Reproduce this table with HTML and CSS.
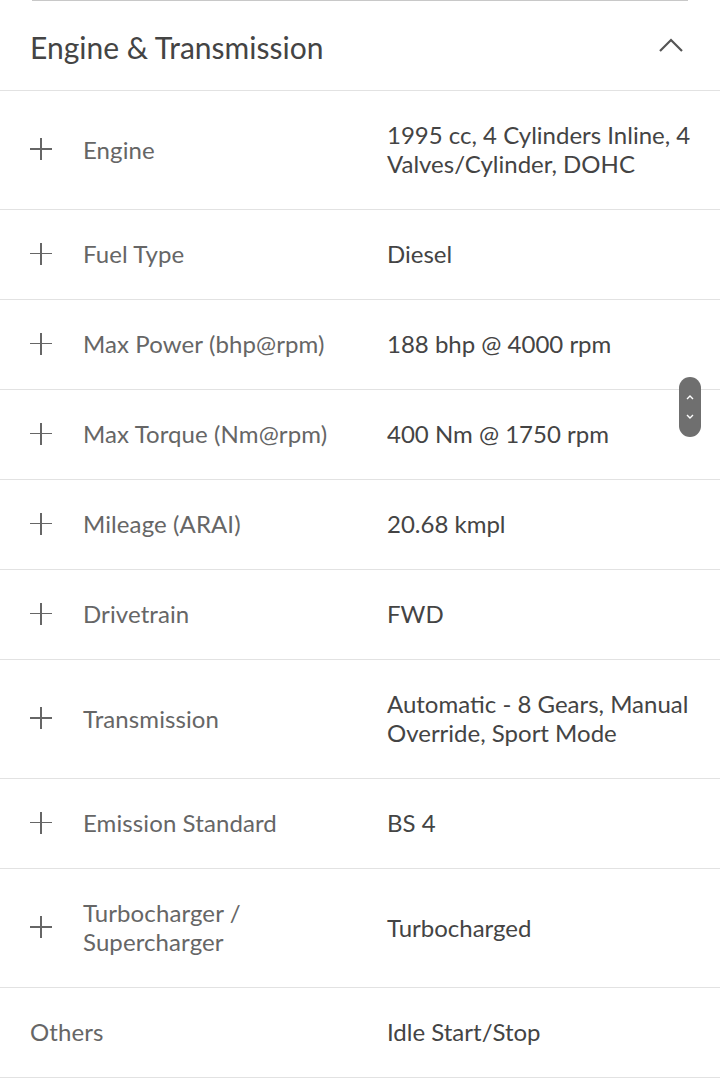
FILE: index.html
```html
<!DOCTYPE html>
<html lang="en">
<head>
    <meta charset="UTF-8">
    <meta name="viewport" content="width=device-width, initial-scale=1.0">
    <title>Specifications</title>
    <link rel="stylesheet" href="styles.css">
</head>
<body>
    <div class="card-edge"></div>

    <div class="spec-header">
        <h2>Engine &amp; Transmission</h2>
        <svg class="chevron" width="26" height="16" viewBox="0 0 26 16">
            <path d="M2 14 L13 3 L24 14" fill="none" stroke="#555" stroke-width="2.2"/>
        </svg>
    </div>

    <div class="spec-list">
        <div class="spec-row">
            <div class="spec-label"><span class="plus"></span><span>Engine</span></div>
            <div class="spec-value">1995 cc, 4 Cylinders Inline, 4 Valves/Cylinder, DOHC</div>
        </div>
        <div class="spec-row">
            <div class="spec-label"><span class="plus"></span><span>Fuel Type</span></div>
            <div class="spec-value">Diesel</div>
        </div>
        <div class="spec-row">
            <div class="spec-label"><span class="plus"></span><span>Max Power (bhp@rpm)</span></div>
            <div class="spec-value">188 bhp @ 4000 rpm</div>
        </div>
        <div class="spec-row">
            <div class="spec-label"><span class="plus"></span><span>Max Torque (Nm@rpm)</span></div>
            <div class="spec-value">400 Nm @ 1750 rpm</div>
        </div>
        <div class="spec-row">
            <div class="spec-label"><span class="plus"></span><span>Mileage (ARAI)</span></div>
            <div class="spec-value">20.68 kmpl</div>
        </div>
        <div class="spec-row">
            <div class="spec-label"><span class="plus"></span><span>Drivetrain</span></div>
            <div class="spec-value">FWD</div>
        </div>
        <div class="spec-row">
            <div class="spec-label"><span class="plus"></span><span>Transmission</span></div>
            <div class="spec-value">Automatic - 8 Gears, Manual Override, Sport Mode</div>
        </div>
        <div class="spec-row">
            <div class="spec-label"><span class="plus"></span><span>Emission Standard</span></div>
            <div class="spec-value">BS 4</div>
        </div>
        <div class="spec-row">
            <div class="spec-label"><span class="plus"></span><span>Turbocharger /<br>Supercharger</span></div>
            <div class="spec-value">Turbocharged</div>
        </div>
        <div class="spec-row">
            <div class="spec-label plain"><span>Others</span></div>
            <div class="spec-value">Idle Start/Stop</div>
        </div>
    </div>

    <!-- fast scroll thumb -->
    <div class="scroll-thumb">
        <svg width="10" height="8" viewBox="0 0 10 8"><path d="M2 6 L5 3 L8 6" fill="none" stroke="#fff" stroke-width="1.4"/></svg>
        <svg width="10" height="8" viewBox="0 0 10 8"><path d="M2 2 L5 5 L8 2" fill="none" stroke="#fff" stroke-width="1.4"/></svg>
    </div>
</body>
</html>
```

FILE: styles.css
```css
body {
    font-family: Lato, "Open Sans", Arial, sans-serif;
    margin: 0;
    padding: 0;
    background-color: #fff;
    color: #444;
}
.card-edge {
    height: 1px;
    margin: 0 32px;
    background-color: #c8c8c8;
}
.spec-header {
    display: flex;
    align-items: center;
    justify-content: space-between;
    height: 89px;
    padding: 0 36px 0 30px;
    border-bottom: 1px solid #e2e2e2;
}
.spec-header h2 {
    margin: 0 0 -2px;
    font-size: 30px;
    font-weight: normal;
    color: #444;
}
.chevron {
    margin-top: -2px;
}
.spec-row {
    display: flex;
    align-items: center;
    padding: 29px 0 31px;
    border-bottom: 1px solid #e2e2e2;
    font-size: 24px;
    line-height: 29px;
}
.spec-label {
    display: flex;
    align-items: center;
    width: 387px;
    padding-left: 30px;
    box-sizing: border-box;
    color: #666;
    letter-spacing: 0.1px;
}
.plus {
    position: relative;
    flex: none;
    width: 22px;
    height: 22px;
    margin-right: 31px;
}
.plus::before,
.plus::after {
    content: "";
    position: absolute;
    background-color: #666;
}
.plus::before {
    left: 0;
    top: 10px;
    width: 22px;
    height: 1.6px;
}
.plus::after {
    left: 10px;
    top: 0;
    width: 1.6px;
    height: 22px;
}
.spec-value {
    flex: 1;
    padding-right: 24px;
    color: #444;
}
.scroll-thumb {
    position: absolute;
    left: 679px;
    top: 377px;
    width: 22px;
    height: 60px;
    border-radius: 11px;
    background-color: #6f6f6f;
    display: flex;
    flex-direction: column;
    align-items: center;
    justify-content: center;
    gap: 12px;
}
.scroll-thumb svg {
    display: block;
}
```
